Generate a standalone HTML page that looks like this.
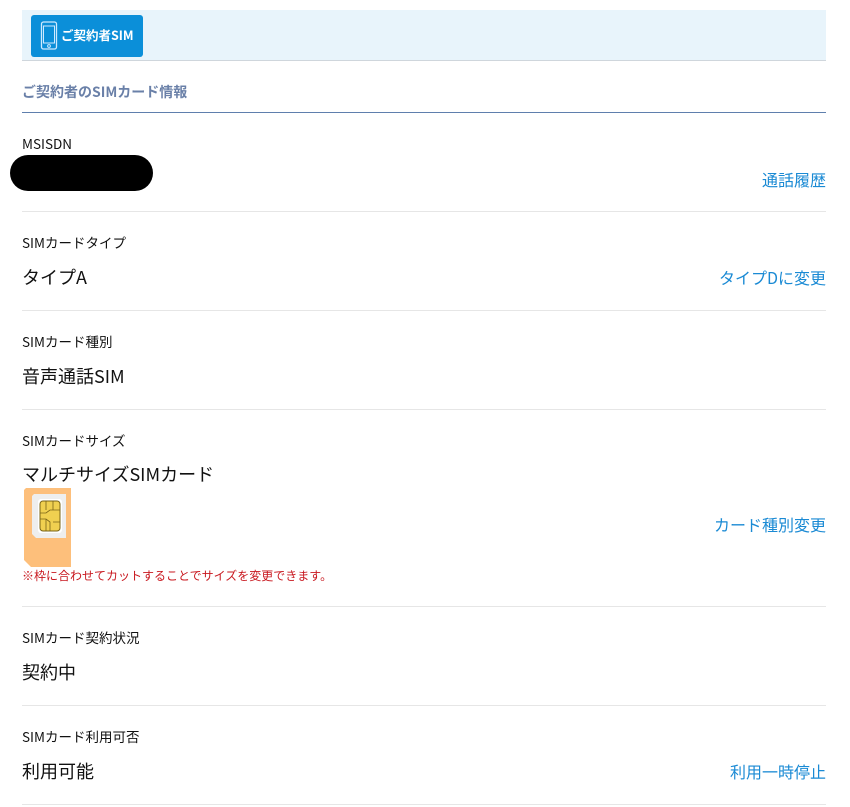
<!DOCTYPE html>
<html><head><meta charset="utf-8"><style>
body{margin:0;width:850px;height:807px;background:#fff;font-family:"Noto Sans CJK JP","Liberation Sans",sans-serif;color:#111;position:relative;overflow:hidden}
.a{position:absolute;white-space:nowrap;line-height:1.2}
.lbl{font-size:13.5px;left:22px}
.val{font-size:18px;left:22px}
.lnk{font-size:16px;color:#1a8ad4;right:24px}
.sep{position:absolute;left:22px;width:804px;height:1px;background:#e6e6e6}
</style></head><body>
<div class="a" style="left:22px;top:10px;width:804px;height:50px;background:#e8f4fb;border-bottom:1px solid #cfd6dc"></div>
<div class="a" style="left:31px;top:15px;width:112px;height:42px;background:#0b8fd9;border-radius:3px"></div>
<svg class="a" style="left:40px;top:21px" width="18" height="30" viewBox="0 0 18 30"><rect x="1.5" y="1" width="15" height="27" rx="2" fill="none" stroke="#cfeaff" stroke-width="1.3"/><rect x="3.5" y="5" width="11" height="17" fill="none" stroke="#cfeaff" stroke-width="1"/><circle cx="9" cy="25" r="1.4" fill="none" stroke="#cfeaff"/></svg>
<div class="a" style="left:61px;top:27px;font-size:12.5px;color:#fff;font-weight:bold">ご契約者SIM</div>
<div class="a" style="left:22px;top:84px;font-size:14px;font-weight:bold;color:#6a80a8">ご契約者のSIMカード情報</div>
<div class="a" style="left:22px;top:112px;width:804px;height:1px;background:#5f7fad"></div>

<div class="a lbl" style="top:135px">MSISDN</div>
<div class="a" style="left:10px;top:155px;width:143px;height:36px;background:#000;border-radius:18px"></div>
<div class="a lnk" style="top:170px">通話履歴</div>
<div class="sep" style="top:211px"></div>

<div class="a lbl" style="top:234px">SIMカードタイプ</div>
<div class="a val" style="top:267px">タイプA</div>
<div class="a lnk" style="top:268px">タイプDに変更</div>
<div class="sep" style="top:310px"></div>

<div class="a lbl" style="top:333px">SIMカード種別</div>
<div class="a val" style="top:366px">音声通話SIM</div>
<div class="sep" style="top:409px"></div>

<div class="a lbl" style="top:432px">SIMカードサイズ</div>
<div class="a val" style="top:464px">マルチサイズSIMカード</div>
<svg class="a" style="left:24px;top:488px" width="48" height="80" viewBox="0 0 48 80"><path d="M2 0H47V79H7L0 72V2Z" fill="#fdbf7b"/><path d="M10 6H42V50H12L8 46V8Z" fill="#eee"/><rect x="14" y="11" width="24" height="34" rx="3" fill="#fff"/><rect x="16" y="13" width="20" height="30" rx="3" fill="#f0d050" stroke="#7a6418" stroke-width="1"/><path d="M16 25h6l4-3h10M22 13v9M29 13v9M16 31h6l4 3v9M29 34h7M22 31v12" stroke="#7a6418" stroke-width=".8" fill="none"/></svg>
<div class="a lnk" style="top:515px">カード種別変更</div>
<div class="a" style="left:22px;top:569px;font-size:12px;color:#c8171e">※枠に合わせてカットすることでサイズを変更できます。</div>
<div class="sep" style="top:606px"></div>

<div class="a lbl" style="top:629px">SIMカード契約状況</div>
<div class="a val" style="top:662px">契約中</div>
<div class="sep" style="top:705px"></div>

<div class="a lbl" style="top:728px">SIMカード利用可否</div>
<div class="a val" style="top:761px">利用可能</div>
<div class="a lnk" style="top:762px">利用一時停止</div>
<div class="sep" style="top:804px"></div>
</body></html>
